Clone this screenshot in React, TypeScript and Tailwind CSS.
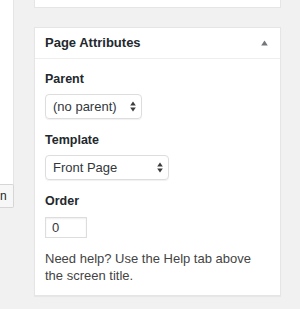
const Arrows = () => (
  <svg width="6" height="11" viewBox="0 0 6 11" className="text-[#3c3c3c]">
    <path d="M3 0.5 L5.8 4.5 L0.2 4.5 Z" fill="currentColor" />
    <path d="M3 10.5 L5.8 6.5 L0.2 6.5 Z" fill="currentColor" />
  </svg>
);

const App = () => {
  return (
    <div className="relative w-[300px] h-[309px] bg-[#f1f1f1] overflow-hidden font-['Liberation_Sans',Arial,sans-serif] text-[#23282d]">
      {/* left column leftovers */}
      <div className="absolute left-0 top-0 w-[14px] h-[185px] bg-white border-r border-[#e5e5e5]" />
      <div className="absolute left-0 top-[184px] w-[14px] h-[24px] bg-[#f7f7f7] border border-l-0 border-[#d6d6d6] rounded-r-[2px] flex items-center text-[12px] leading-none">
        n
      </div>

      <div className="ml-[34px] w-[247px] flex flex-col">
        <div className="h-[8px] bg-white border border-t-0 border-[#e5e5e5]" />
        <div className="mt-[19px] bg-white border border-[#e5e5e5] shadow-[0_1px_1px_rgba(0,0,0,0.04)]">
          <div className="h-[31px] flex items-center justify-between pl-[10px] pr-[12px] border-b border-[#eee]">
            <span className="text-[13px] font-semibold">Page Attributes</span>
            <svg width="7" height="6" viewBox="0 0 7 6">
              <path d="M3.5 0.5 L6.8 5.5 L0.2 5.5 Z" fill="#72777c" />
            </svg>
          </div>
          <div className="px-[10px] pt-[11px] pb-[11px] flex flex-col">
            <span className="text-[12.5px] font-semibold leading-[18px]">Parent</span>
            <div className="mt-[6px] w-[97px] h-[25px] border border-[#ddd] rounded-[4px] shadow-[0_1px_1px_rgba(0,0,0,0.06)] flex items-center justify-between pl-[7px] pr-[5px] text-[13px] text-[#32373c]">
              <span>(no parent)</span>
              <Arrows />
            </div>
            <span className="mt-[12px] text-[12.5px] font-semibold leading-[18px]">Template</span>
            <div className="mt-[6px] w-[124px] h-[25px] border border-[#ddd] rounded-[4px] shadow-[0_1px_1px_rgba(0,0,0,0.06)] flex items-center justify-between pl-[7px] pr-[5px] text-[13px] text-[#32373c]">
              <span>Front Page</span>
              <Arrows />
            </div>
            <span className="mt-[12px] text-[12.5px] font-semibold leading-[18px]">Order</span>
            <div className="mt-[7px] w-[42px] h-[21px] border border-[#ddd] shadow-[inset_0_1px_2px_rgba(0,0,0,0.07)] flex items-center pl-[6px] text-[13px] text-[#32373c]">
              0
            </div>
            <p className="mt-[12px] text-[13px] leading-[17px] text-[#444] w-[225px]">
              Need help? Use the Help tab above the screen title.
            </p>
          </div>
        </div>
      </div>
    </div>
  );
};

export default App;
